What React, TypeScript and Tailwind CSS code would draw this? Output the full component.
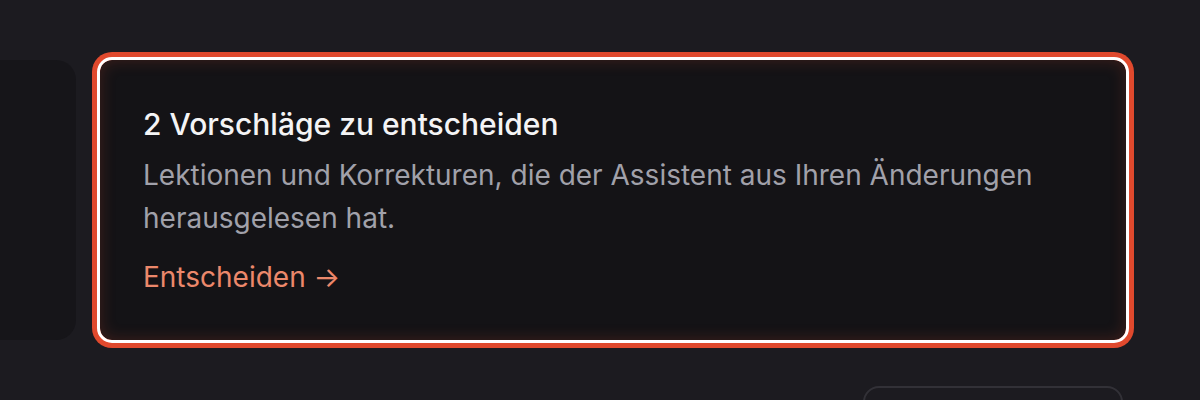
export default function App() {
  return (
    <main
      className="min-h-[400px] w-full overflow-hidden bg-[#1c1b20] pt-[60px]"
      style={{ fontFamily: "Inter, 'Noto Sans', sans-serif" }}
    >
      <div className="ml-[-224px] grid grid-cols-[300px_1026px] gap-6">
        {/* previous card, mostly scrolled out to the left */}
        <div className="h-[280px] rounded-[20px] bg-[#161519]" />

        <div className="flex flex-col">
          <section className="h-[280px] rounded-[12px] bg-[#141316] px-[43px] pt-[42px] outline-3 outline-white shadow-[0_0_0_8px_#e0492d,inset_0_0_16px_rgba(224,74,47,0.22)]">
            <h2 className="text-[30px] leading-[44px] font-medium text-[#f4f4f5]">
              2 Vorschläge zu entscheiden
            </h2>
            <p className="mt-[8px] text-[28px] leading-[43px] text-[#a1a1aa]">
              Lektionen und Korrekturen, die der Assistent aus Ihren Änderungen herausgelesen hat.
            </p>
            <a href="#" className="mt-[16px] inline-block text-[28px] leading-[42px] text-[#ec886b]">
              Entscheiden →
            </a>
          </section>

          <div className="mt-[46px] mr-[3px] h-[48px] w-[260px] self-end rounded-[16px] border-2 border-[#323137]" />
        </div>
      </div>
    </main>
  );
}
